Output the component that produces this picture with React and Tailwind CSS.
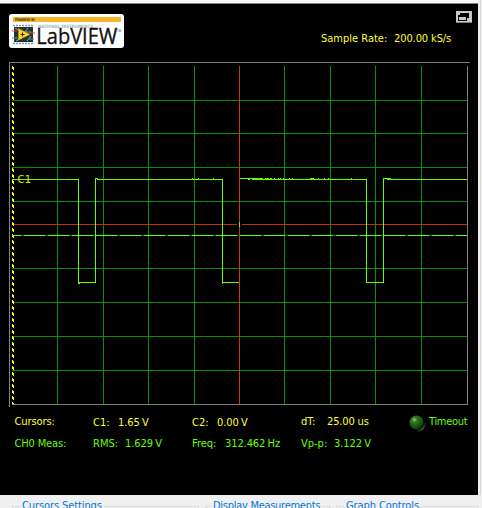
import React from "react";

const VERTICALS = [57, 103, 148, 194, 284, 330, 375, 421];
const HORIZONTALS = [100, 133, 167, 201, 268, 302, 336, 370];
const DASHES = Array.from({ length: 19 }, (_, i) => 21 + i * 24);
const NOISE = [192, 198, 213, 274, 278, 280, 283, 289, 292, 310, 313, 318, 324, 328, 351];

function Logo() {
  return (
    <svg width="115" height="34" viewBox="0 0 115 34" className="block">
      <rect width="115" height="34" rx="3" fill="#fff" />
      <rect x="4" y="3" width="108" height="5" fill="#f9b529" />
      <text x="6" y="7.2" fontSize="3.8" fontWeight="bold" textLength="20" lengthAdjust="spacingAndGlyphs" fill="#3b2a08">POWERED BY</text>
      <text x="29" y="13.5" fontSize="4.5" fontWeight="bold" textLength="55" lengthAdjust="spacingAndGlyphs" fill="#9db6c4">NATIONAL INSTRUMENTS</text>
      <path d="M4 11.5H25M4 29.5H25" stroke="#8098a8" strokeWidth="1.5" strokeDasharray="2 1" />
      <rect x="5" y="13" width="19" height="15" fill="#26332f" />
      <path d="M6 14l5 3v3M19 14l-3 4h6M7 27l6-3M18 27l4-5" stroke="#77a996" fill="none" />
      <path d="M3 17h5M21 19h5" stroke="#d94c4c" />
      <path d="M3 24h6M20 25h5" stroke="#438cc5" />
      <path d="M9.5 14.5L21 20.5L9.5 26Z" fill="#ffd329" stroke="#d99518" strokeWidth=".5" />
      <path d="M11.5 20.5h4M13.5 18.5v4" stroke="#302b16" />
      <text x="27.3" y="30" fontSize="21" textLength="81" lengthAdjust="spacingAndGlyphs" fill="#111" stroke="#111" strokeWidth=".3" fontFamily="Open Sans, sans-serif">LabVIEW</text>
      <text x="108" y="18" fontSize="3.6" textLength="4" lengthAdjust="spacingAndGlyphs" fill="#111">TM</text>
    </svg>
  );
}

function Scope() {
  return (
    <svg width="461" height="345" viewBox="9 62 461 345" shapeRendering="crispEdges" className="block">
      <path d="M9 62.5H470M9.5 62V407M12 404.5H468M467.5 66V405" stroke="#808080" fill="none" />
      {VERTICALS.map((x) => <path key={x} d={`M${x + 0.5} 66V404`} stroke="#009600" />)}
      {HORIZONTALS.map((y) => <path key={y} d={`M12 ${y + 0.5}H467`} stroke="#009600" />)}
      <path d="M239.5 66V404" stroke="#c83c00" />
      <path d="M12.5 66V404" stroke="#ffff00" strokeDasharray="3 3" />
      <path d="M13.5 67V404" stroke="#ffff00" strokeDasharray="3 3" />
      <path d="M14 224.5H237M242 224.5H467" stroke="#c83200" />
      <path d="M12 235.5H467" stroke="#66ff00" />
      {DASHES.map((x) => <path key={x} d={`M${x} 235.5h3`} stroke="#087030" />)}
      <path d="M12 179.5H78.5V282.5H95.5V178.5H97.5V179.5H222.5V282.5H239M240 178.5H263M252 179.5H366.5V282.5H383.5V178.5H390.5M387 179.5H467" fill="none" stroke="#66ff00" />
      <path d="M78 283.5h2M222 283.5h1M248 179.5h2M265 178.5h4M270 178.5h2M311 178.5h2M239.5 222v5" stroke="#66ff00" />
      {NOISE.map((x) => <path key={x} d={`M${x} 178.5h1`} stroke="#66ff00" />)}
      <text x="17.5" y="183" fontSize="11" textLength="13.5" fill="#e6f000" fontFamily="DejaVu Sans Condensed, DejaVu Sans, sans-serif">C1</text>
    </svg>
  );
}

function Label({ children, className = "" }) {
  return <span className={`block whitespace-pre leading-[14px] ${className}`}>{children}</span>;
}

function Volts({ value }) {
  return <Label className="tracking-[-0.1px] [word-spacing:-0.7px]">{value}</Label>;
}

function Group({ title, className }) {
  return (
    <fieldset className={`h-6 border border-[#dcdcdc] ${className}`}>
      <legend className="px-[2px] text-[11px] leading-[14px] text-[#0078d7]">{title}</legend>
    </fieldset>
  );
}

export default function App() {
  return (
    <div className="h-[508px] w-[482px] overflow-hidden bg-[#f0f0f0] font-['DejaVu_Sans_Condensed','DejaVu_Sans',sans-serif] text-[11px]">
      <div className="flex h-[495px]">
        <div className="flex w-[478px] flex-col">
          <div className="h-[3px] bg-[#f8f8f8]" />
          <div className="h-px bg-[#808080]" />
          <main className="h-[491px] bg-black">
            <header className="flex h-[58px] justify-between pl-[9px] pr-[6px]">
              <div className="pt-[10px]"><Logo /></div>
              <div className="flex w-[151px] flex-col">
                <svg width="16" height="12" viewBox="0 0 16 12" shapeRendering="crispEdges" className="mt-[7px] self-end">
                  <rect width="16" height="12" fill="#c8c8c8" />
                  <path d="M0 11.5H16" stroke="#808080" />
                  <rect x="4" y="2" width="9" height="5" fill="#000" />
                  <rect x="2" y="4" width="9" height="6" fill="#000" />
                  <rect x="3" y="6" width="7" height="3" fill="#c8c8c8" />
                </svg>
                <div className="mt-[9px] flex text-[#ffff33]">
                  <Label className="w-[73px]">Sample Rate:</Label>
                  <Label className="tracking-[-0.1px]">200.00 kS/s</Label>
                </div>
              </div>
            </header>
            <div className="pl-[9px]"><Scope /></div>
            <section className="flex flex-col gap-[7px] pl-[14.5px] pt-[8px]">
              <div className="grid grid-cols-[78.5px_99px_109px_107px_70px] text-[#ffff33]">
                <Label className="tracking-[-0.1px]">Cursors:</Label>
                <div className="flex pt-px"><Label className="w-[25px]">C1:</Label><Volts value="1.65 V" /></div>
                <div className="flex pt-px"><Label className="w-[25px]">C2:</Label><Volts value="0.00 V" /></div>
                <div className="flex"><Label className="w-[26px]">dT:</Label><Label className="tracking-[-0.15px]">25.00 us</Label></div>
                <div className="flex text-[#66ff00]">
                  <svg width="21" height="18" viewBox="0 0 21 18" className="-mb-1 shrink-0">
                    <defs>
                      <radialGradient id="led" cx=".35" cy=".3" r=".75"><stop offset="0" stopColor="#a0cc95" /><stop offset=".25" stopColor="#2f7a20" /><stop offset="1" stopColor="#0b3506" /></radialGradient>
                      <linearGradient id="rim" x1="1" y1="0" x2="0" y2="1"><stop offset="0" stopColor="#111" /><stop offset=".5" stopColor="#555" /><stop offset="1" stopColor="#111" /></linearGradient>
                    </defs>
                    <path d="M17 8a8 8 0 0 1-8 8" stroke="url(#rim)" strokeWidth="2" fill="none" />
                    <circle cx="8.5" cy="7.5" r="7" fill="url(#led)" />
                  </svg>
                  <Label className="tracking-[-0.3px]">Timeout</Label>
                </div>
              </div>
              <div className="grid grid-cols-[78.5px_99px_109px_107px] text-[#66ff00]">
                <Label className="tracking-[-0.15px]">CH0 Meas:</Label>
                <div className="flex"><Label className="w-[32px]">RMS:</Label><Volts value="1.629 V" /></div>
                <div className="flex"><Label className="w-[33px]">Freq:</Label><Volts value="312.462 Hz" /></div>
                <div className="flex"><Label className="w-[33px]">Vp-p:</Label><Volts value="3.122 V" /></div>
              </div>
            </section>
          </main>
        </div>
        <div className="w-[2px] bg-[#f0f0f0]" />
        <div className="w-px bg-[#d5d5d5]" />
      </div>
      <div className="flex pl-[12px] pt-[4px]">
        <Group title="Cursors Settings" className="w-[187px] pl-[7px] tracking-[-0.1px]" />
        <Group title="Display Measurements" className="ml-[6px] w-[125px] pl-[5px] tracking-[-0.28px]" />
        <Group title="Graph Controls" className="ml-[6px] w-[142px] pl-[7px] tracking-[-0.1px]" />
      </div>
    </div>
  );
}
